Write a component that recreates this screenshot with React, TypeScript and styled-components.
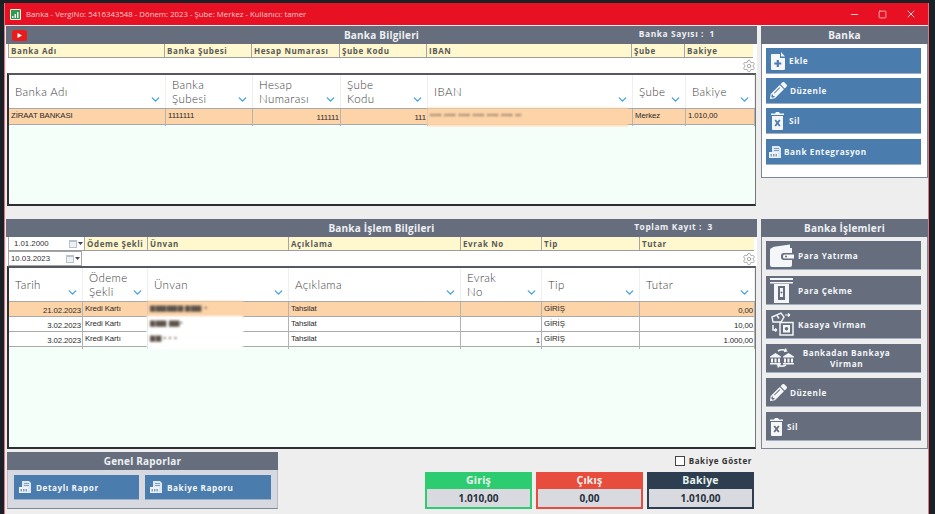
import React from 'react';
import styled, { createGlobalStyle } from 'styled-components';
import { ChevronDown, Minus, Settings, Square, X } from 'lucide-react';
import { FaPencilAlt } from 'react-icons/fa';

const GlobalStyle = createGlobalStyle`
  * { box-sizing: border-box; }
  html, body { margin: 0; height: 100%; overflow: hidden; background: #1b1f26; }
  body { font-family: "Open Sans", "Liberation Sans", sans-serif; }
`;

const Screen = styled.div`
  width: 935px;
  height: 514px;
  padding: 3px 6px 0 4px;
`;

const Window = styled.div`
  height: 511px;
  background: #eeeeee;
  border-left: 1px solid #e8707c;
  border-right: 1px solid #e8707c;
  display: flex;
  flex-direction: column;
`;

const TitleBar = styled.div`
  height: 22px;
  background: #e81123;
  color: #f6c9cd;
  display: flex;
  align-items: center;
  padding-left: 5px;
  font-size: 7.8px;
  gap: 5px;
  flex: none;
`;

const TitleText = styled.span`
  flex: 1;
`;

const WinButtons = styled.div`
  display: flex;
  align-items: center;
  gap: 18px;
  padding-right: 11px;
  color: #f8d5d8;
`;

const Main = styled.div`
  flex: 1;
  display: grid;
  grid-template-columns: 751px 167px;
  gap: 4px;
  padding: 1px 0 0 1px;
`;

const Column = styled.div`
  display: flex;
  flex-direction: column;
`;

const Panel = styled.section<{ $height: number; $mb?: number }>`
  height: ${p => p.$height}px;
  margin-bottom: ${p => p.$mb ?? 0}px;
  display: flex;
  flex-direction: column;
  flex: none;
`;

const PanelHeader = styled.header`
  height: 18px;
  flex: none;
  background: #666e7e;
  color: #eef0f3;
  display: grid;
  grid-template-columns: 1fr auto 1fr;
  align-items: center;
  font-size: 10px;
  font-weight: 700;
  letter-spacing: 0.2px;
`;

const YouTubeMark = styled.svg`
  margin-left: 6px;
`;

const HeaderInfo = styled.span<{ $right: number }>`
  grid-column: 3;
  justify-self: end;
  padding: 0 ${p => p.$right}px 3px 0;
  font-size: 8.4px;
  letter-spacing: 0.6px;
`;

const FilterGrid = styled.div<{ $cols: string }>`
  display: grid;
  grid-template-columns: ${p => p.$cols};
  height: 14px;
  flex: none;
  padding-left: 2px;
  background: #ffffff;
`;

const FilterCell = styled.div`
  background: #fff8cf;
  border-left: 1px solid #a5a5a5;
  border-bottom: 1px solid #9c9c9c;
  color: #5a5a58;
  font-size: 8px;
  font-weight: 700;
  letter-spacing: 0.6px;
  line-height: 13px;
  padding-left: 2px;
  white-space: nowrap;
  overflow: hidden;
`;

const BlankRow = styled.div`
  height: 15px;
  flex: none;
  background: #ffffff;
  display: flex;
  justify-content: flex-end;
  align-items: center;
  padding-right: 1px;
  color: #a2a2a2;
`;

const TableBox = styled.div`
  flex: 1;
  margin: 0 1px;
  border: 2px solid #2f2f33;
  border-right: 1px solid #777;
  border-top-color: #55585e;
  background: #f5fffa;
`;

const TableRow = styled.div<{ $cols: string; $height: number; $bg?: string }>`
  display: grid;
  grid-template-columns: ${p => p.$cols};
  height: ${p => p.$height}px;
  background: ${p => p.$bg ?? '#ffffff'};
  border-bottom: 1px solid #a9a9a9;
`;

const HeadCell = styled.div`
  display: flex;
  align-items: center;
  justify-content: space-between;
  padding: 0 3px 0 6px;
  border-right: 1px solid #efefef;
  color: #3e3e3e;
  font-family: Lato, "Open Sans", sans-serif;
  font-size: 11.5px;
  line-height: 14px;
  letter-spacing: 0.4px;
  font-weight: 300;
  white-space: pre-line;

  svg {
    align-self: flex-end;
    flex: none;
    margin-bottom: 2px;
    color: #3f9fe3;
  }
`;

const Cell = styled.div<{ $right?: boolean }>`
  border-right: 1px solid #b3b3b3;
  color: #2a2a2a;
  font-family: "Liberation Sans", sans-serif;
  font-size: 7.8px;
  letter-spacing: -0.1px;
  line-height: 14px;
  padding: ${p => (p.$right ? '2px 1px 0 0' : '0 0 0 2px')};
  text-align: ${p => (p.$right ? 'right' : 'left')};
  white-space: nowrap;
  overflow: hidden;
`;

const MaskCell = styled(Cell)`
  overflow: visible;
  position: relative;
  z-index: 1;
`;

const Redacted = styled.span<{ $bg: string; $over: number }>`
  display: block;
  height: 18px;
  margin: -1px ${p => p.$over}px 0 -3px;
  padding-left: 3px;
  background: ${p => p.$bg};
  color: #5d534b;
  font-size: 7px;
  letter-spacing: 0.5px;
  filter: blur(1.1px);
`;

const DateRows = styled.div`
  border-left: 1px solid #a5a5a5;
  border-bottom: 1px solid #9c9c9c;
  background: #fff;
  color: #333;
  font-family: "Liberation Sans", sans-serif;
  font-size: 7.8px;
  line-height: 13px;
  padding-left: 5px;
  display: flex;
  justify-content: space-between;
  padding-right: 1px;
`;

const DateOnlyRow = styled.div`
  height: 15px;
  flex: none;
  background: #fff;
  display: flex;
  justify-content: space-between;
  align-items: center;
  padding-right: 1px;
  color: #a2a2a2;
`;

const DateBox = styled(DateRows)`
  width: 74px;
  margin-left: 2px;
  height: 15px;
  padding-left: 2px;
  border: 1px solid #a5a5a5;
  line-height: 13px;
`;

const DropMark = styled.span`
  display: inline-flex;
  align-items: center;
  gap: 1px;
`;

const SideBody = styled.div<{ $bg: string }>`
  flex: 1;
  background: ${p => p.$bg};
  border: 1px solid #7f8694;
  border-top: none;
  padding: 4px 6px 0 4px;
  display: flex;
  flex-direction: column;
`;

const ActionButton = styled.div<{ $bg: string; $h: number; $mb: number; $icon: number }>`
  height: ${p => p.$h}px;
  margin-bottom: ${p => p.$mb}px;
  background: ${p => p.$bg};
  color: #f4f6f8;
  font-size: 8.2px;
  font-weight: 700;
  letter-spacing: 0.55px;
  display: grid;
  grid-template-columns: ${p => p.$icon}px 1fr;
  align-items: center;
  flex: none;
  border-bottom: 1px solid #9fb0c5;
`;

const IconSlot = styled.span`
  display: flex;
  justify-content: center;
  align-items: center;
  color: #f4f6f8;
`;

const Centered = styled.span`
  text-align: center;
  line-height: 11px;
  padding-right: 26px;
  white-space: nowrap;
`;

const PanelTitleOnly = styled(PanelHeader)`
  display: flex;
  justify-content: center;
`;

const BottomRow = styled.div`
  margin-top: 3px;
  display: flex;
  justify-content: space-between;
  align-items: flex-start;
  padding-right: 2px;
`;

const ReportPanel = styled.div`
  width: 271px;
  margin-left: 1px;
  height: 57px;
  background: #d6dae0;
  border: 1px solid #b6bac4;
  border-bottom-color: #7f8694;
`;

const ReportHeader = styled(PanelTitleOnly)`
  margin: -1px -1px 0;
`;

const ReportButtons = styled.div`
  display: grid;
  grid-template-columns: 125px 126px;
  gap: 6px;
  padding: 5px 0 0 6px;
`;

const TotalsArea = styled.div`
  width: 330px;
  display: flex;
  flex-direction: column;
  align-items: stretch;
`;

const CheckLine = styled.label`
  height: 17px;
  display: flex;
  justify-content: flex-end;
  align-items: center;
  gap: 4px;
  color: #333;
  font-size: 8px;
  font-weight: 700;
  letter-spacing: 0.6px;
  padding-right: 3px;
`;

const CheckBox = styled.span`
  width: 10px;
  height: 10px;
  background: #fff;
  border: 1px solid #444;
`;

const TotalsGrid = styled.div`
  margin-top: 3px;
  display: grid;
  grid-template-columns: repeat(3, 107px);
  gap: 4px;
`;

const TotalCard = styled.div<{ $bg: string }>`
  height: 37px;
  background: ${p => p.$bg};
  padding: 0 2px 2px;
  display: flex;
  flex-direction: column;
  color: #e8f2ee;
  font-size: 10.5px;
  font-weight: 700;
  letter-spacing: 0.2px;
  text-align: center;
  line-height: 17px;
`;

const TotalValue = styled.div`
  flex: 1;
  background: #d8dadf;
  color: #27303c;
  font-size: 10px;
  letter-spacing: 0;
  line-height: 18px;
`;

const Blue = '#4a7dae';
const Slate = '#666e7e';

const FileAddIcon = () => (
  <svg width="14" height="19" viewBox="0 0 14 19">
    <path d="M1 3h8v4h5v11a1 1 0 0 1-1 1H1a1 1 0 0 1-1-1V4a1 1 0 0 1 1-1z" fill="#f4f6f8" />
    <path d="M10 1l4 4.500h-4z" fill="#f4f6f8" />
    <path d="M5.700 9h2.200v2.400h2.400v2.200H7.900V16H5.700v-2.400H3.300v-2.200h2.400z" fill={Blue} />
  </svg>
);

const TrashIcon = ({ cross }: { cross: string }) => (
  <svg width="13" height="19" viewBox="0 0 13 19">
    <path d="M0 2.500h4l1-1.500h3l1 1.500h4v1.500H0z" fill="#f4f6f8" />
    <path d="M1 5h11v13a1 1 0 0 1-1 1H2a1 1 0 0 1-1-1z" fill="#f4f6f8" />
    <path d="M4.200 9l4.600 6m0-6l-4.600 6" stroke={cross} strokeWidth="1.800" />
  </svg>
);

const ReportIcon = () => (
  <svg width="12" height="12" viewBox="0 0 12 12">
    <path d="M3 0h7l2 2v10H3z" fill="#dfe8f2" />
    <path d="M0 6h9v6H0z" fill="#eef3f8" />
    <path d="M1.500 8h1.500v2.500H1.500zM4 8h1.500v2.500H4zM6.500 8h1.500v2.500H6.500z" fill="#7e9fc2" />
    <path d="M5 2h5v1H5zM5 4h5v1H5z" fill="#7e9fc2" />
  </svg>
);

const WalletIcon = () => (
  <svg width="24" height="23" viewBox="0 0 24 23">
    <path d="M2 5C2 3.500 3 3 4 2.800L20 .5v3.500H6z" fill="#f4f6f8" />
    <path d="M0 6a2 2 0 0 1 2-2h20v5h-8a3 3 0 0 0-3 3v1a3 3 0 0 0 3 3h8v5a2 2 0 0 1-2 2H2a2 2 0 0 1-2-2z" fill="#f4f6f8" />
    <path d="M14.500 10.500H24v4h-9.500a1.500 1.500 0 0 1-1.500-1.500v-1a1.500 1.500 0 0 1 1.500-1.500z" fill="#f4f6f8" />
    <circle cx="16" cy="12.500" r="1" fill={Slate} />
  </svg>
);

const AtmIcon = () => (
  <svg width="24" height="25" viewBox="0 0 24 25">
    <path d="M0 0h23v2H0zM0 4h23v1.500H0z" fill="#f4f6f8" />
    <path d="M4 6h15v19H4z" fill="#f4f6f8" />
    <path d="M8 8h7v14H8z" fill={Slate} />
    <path d="M10 10h3v9h-3z" fill="#f4f6f8" />
    <circle cx="11.500" cy="14.500" r="1" fill={Slate} />
  </svg>
);

const SafeIcon = () => (
  <svg width="24" height="24" viewBox="0 0 24 24">
    <path d="M2 5l9-4 3 4-3 5H3z" fill="none" stroke="#f4f6f8" strokeWidth="1.400" />
    <path d="M7 3.500l2 3" stroke="#f4f6f8" strokeWidth="1.400" />
    <path d="M15 3h5M20 3l-2-1.500M20 3l-2 1.500" stroke="#f4f6f8" strokeWidth="1.200" fill="none" />
    <path d="M3 13v5h4M7 18l-2-1.500M7 18l-2 1.500" stroke="#f4f6f8" strokeWidth="1.500" fill="none" />
    <path d="M10 10.500h13V23H10z" fill="none" stroke="#f4f6f8" strokeWidth="1.500" />
    <path d="M13 13h7v7.500h-7z" fill="#f4f6f8" />
    <circle cx="16.500" cy="16.700" r="1.800" fill={Slate} />
  </svg>
);

const BankSwapIcon = () => (
  <svg width="24" height="24" viewBox="0 0 24 24">
    <path d="M8 5a8 8 0 0 1 8 0l-2 .5M16 5l-.5-2.500M16 19a8 8 0 0 1-8 0l2-.5M8 19l.500 2.500" stroke="#f4f6f8" strokeWidth="1.500" fill="none" />
    <g fill="#f4f6f8">
      <path d="M0 10.500L5.500 7l5.500 3.500v1H0zM1 12.500h2v4H1zM4.500 12.500h2v4h-2zM8 12.500h2v4H8zM0 17h11v1.500H0z" />
      <path d="M13 10.500L18.500 7l5.500 3.500v1H13zM14 12.500h2v4h-2zM17.500 12.500h2v4h-2zM21 12.500h2v4h-2zM13 17h11v1.500H13z" />
    </g>
  </svg>
);

const CalendarMark = () => (
  <DropMark>
    <svg width="8" height="8" viewBox="0 0 8 8">
      <rect width="8" height="8" fill="#b9c2cc" />
      <rect x="1" y="2" width="6" height="5" fill="#eef1f4" />
    </svg>
    <svg width="5" height="3" viewBox="0 0 5 3"><path d="M0 0h5L2.500 3z" fill="#445" /></svg>
  </DropMark>
);

const bankCols = '157px 87px 88px 87px 205px 53px 69px';
const bankFilterCols = '156px 87px 88px 87px 205px 53px 69px';
const opCols = '74px 65px 141px 172px 81px 98px 115px';
const opFilterCols = '76px 63px 141px 172px 81px 98px 115px';

const Head = ({ label }: { label: string }) => (
  <HeadCell>
    <span>{label}</span>
    <ChevronDown size={13} strokeWidth={2.4} />
  </HeadCell>
);

export default function App() {
  return (
    <Screen>
      <GlobalStyle />
      <Window>
        <TitleBar>
          <svg width="11" height="11" viewBox="0 0 11 11">
            <rect width="11" height="11" rx="1" fill="#dff3e2" />
            <rect x="1" y="1" width="9" height="9" fill="#2f9a4e" />
            <path d="M2 9V7h1.500v2zM4.500 9V5H6v4zM7 9V3h1.500v6z" fill="#e7f7ea" />
          </svg>
          <TitleText>Banka - VergiNo: 5416343548 - Dönem: 2023 - Şube: Merkez - Kullanıcı: tamer</TitleText>
          <WinButtons>
            <Minus size={11} />
            <Square size={9} />
            <X size={12} />
          </WinButtons>
        </TitleBar>
        <Main>
          <Column>
            <Panel $height={180} $mb={13}>
              <PanelHeader>
                <YouTubeMark width="15" height="11" viewBox="0 0 15 11">
                  <rect width="15" height="11" rx="2.500" fill="#e81c1c" />
                  <path d="M5.500 3l4.500 2.500L5.500 8z" fill="#fff" />
                </YouTubeMark>
                <span>Banka Bilgileri</span>
                <HeaderInfo $right={42}>Banka Sayısı :&nbsp;&nbsp;1</HeaderInfo>
              </PanelHeader>
              <FilterGrid $cols={bankFilterCols}>
                {['Banka Adı', 'Banka Şubesi', 'Hesap Numarası', 'Şube Kodu', 'IBAN', 'Şube', 'Bakiye'].map(c => (
                  <FilterCell key={c}>{c}</FilterCell>
                ))}
              </FilterGrid>
              <BlankRow>
                <Settings size={14} strokeWidth={1.6} />
              </BlankRow>
              <TableBox>
                <TableRow $cols={bankCols} $height={34}>
                  {['Banka Adı', 'Banka\nŞubesi', 'Hesap\nNumarası', 'Şube\nKodu', 'IBAN', 'Şube', 'Bakiye'].map(c => (
                    <Head key={c} label={c} />
                  ))}
                </TableRow>
                <TableRow $cols={bankCols} $height={16} $bg="#fdd3a8">
                  <Cell>ZİRAAT BANKASI</Cell>
                  <Cell>1111111</Cell>
                  <Cell $right>111111</Cell>
                  <Cell $right>111</Cell>
                  <MaskCell>
                    <Redacted $bg="#fdd3a8" $over={4}>•••• •••• •••• •••• •••• •••• ••</Redacted>
                  </MaskCell>
                  <Cell>Merkez</Cell>
                  <Cell>1.010,00</Cell>
                </TableRow>
              </TableBox>
            </Panel>

            <Panel $height={230}>
              <PanelHeader>
                <span />
                <span>Banka İşlem Bilgileri</span>
                <HeaderInfo $right={44}>Toplam Kayıt :&nbsp;&nbsp;3</HeaderInfo>
              </PanelHeader>
              <FilterGrid $cols={opFilterCols}>
                <DateRows>
                  1.01.2000
                  <CalendarMark />
                </DateRows>
                {['Ödeme Şekli', 'Ünvan', 'Açıklama', 'Evrak No', 'Tip', 'Tutar'].map(c => (
                  <FilterCell key={c}>{c}</FilterCell>
                ))}
              </FilterGrid>
              <DateOnlyRow>
                <DateBox>
                  10.03.2023
                  <CalendarMark />
                </DateBox>
                <Settings size={14} strokeWidth={1.6} />
              </DateOnlyRow>
              <TableBox>
                <TableRow $cols={opCols} $height={34}>
                  {['Tarih', 'Ödeme\nŞekli', 'Ünvan', 'Açıklama', 'Evrak\nNo', 'Tip', 'Tutar'].map(c => (
                    <Head key={c} label={c} />
                  ))}
                </TableRow>
                {[
                  { date: '21.02.2023', mask: '▆▆▆▆▆▆ ▆▆▆ ▪', no: '', total: '0,00', bg: '#fdd3a8' },
                  { date: '3.02.2023', mask: '▆▆▆ ▆▆▪', no: '', total: '10,00', bg: '#ffffff' },
                  { date: '3.02.2023', mask: '▆▆   • • •', no: '1', total: '1.000,00', bg: '#ffffff' },
                ].map(r => (
                  <TableRow key={r.total} $cols={opCols} $height={15} $bg={r.bg}>
                    <Cell $right>{r.date}</Cell>
                    <Cell>Kredi Kartı</Cell>
                    <MaskCell>
                      <Redacted $bg={r.bg} $over={45}>{r.mask}</Redacted>
                    </MaskCell>
                    <Cell>Tahsilat</Cell>
                    <Cell $right>{r.no}</Cell>
                    <Cell>GİRİŞ</Cell>
                    <Cell $right>{r.total}</Cell>
                  </TableRow>
                ))}
              </TableBox>
            </Panel>

            <BottomRow>
              <ReportPanel>
                <ReportHeader>Genel Raporlar</ReportHeader>
                <ReportButtons>
                  <ActionButton $bg={Blue} $h={25} $mb={0} $icon={22}>
                    <IconSlot><ReportIcon /></IconSlot>
                    <span>Detaylı Rapor</span>
                  </ActionButton>
                  <ActionButton $bg={Blue} $h={25} $mb={0} $icon={22}>
                    <IconSlot><ReportIcon /></IconSlot>
                    <span>Bakiye Raporu</span>
                  </ActionButton>
                </ReportButtons>
              </ReportPanel>
              <TotalsArea>
                <CheckLine>
                  <CheckBox />
                  Bakiye Göster
                </CheckLine>
                <TotalsGrid>
                  <TotalCard $bg="#2ecc71">
                    Giriş
                    <TotalValue>1.010,00</TotalValue>
                  </TotalCard>
                  <TotalCard $bg="#e74c3c">
                    Çıkış
                    <TotalValue>0,00</TotalValue>
                  </TotalCard>
                  <TotalCard $bg="#2c3e50">
                    Bakiye
                    <TotalValue>1.010,00</TotalValue>
                  </TotalCard>
                </TotalsGrid>
              </TotalsArea>
            </BottomRow>
          </Column>

          <Column>
            <Panel $height={152} $mb={41}>
              <PanelTitleOnly>Banka</PanelTitleOnly>
              <SideBody $bg="#ffffff">
                <ActionButton $bg={Blue} $h={26} $mb={4} $icon={23}>
                  <IconSlot><FileAddIcon /></IconSlot>
                  <span>Ekle</span>
                </ActionButton>
                <ActionButton $bg={Blue} $h={26} $mb={4} $icon={24}>
                  <IconSlot><FaPencilAlt size={17} /></IconSlot>
                  <span>Düzenle</span>
                </ActionButton>
                <ActionButton $bg={Blue} $h={26} $mb={5} $icon={23}>
                  <IconSlot><TrashIcon cross={Blue} /></IconSlot>
                  <span>Sil</span>
                </ActionButton>
                <ActionButton $bg={Blue} $h={26} $mb={0} $icon={18}>
                  <IconSlot><ReportIcon /></IconSlot>
                  <span>Bank Entegrasyon</span>
                </ActionButton>
              </SideBody>
            </Panel>

            <Panel $height={230}>
              <PanelTitleOnly>Banka İşlemleri</PanelTitleOnly>
              <SideBody $bg="#eeeeee">
                <ActionButton $bg={Slate} $h={29} $mb={6} $icon={32}>
                  <IconSlot><WalletIcon /></IconSlot>
                  <span>Para Yatırma</span>
                </ActionButton>
                <ActionButton $bg={Slate} $h={29} $mb={5} $icon={32}>
                  <IconSlot><AtmIcon /></IconSlot>
                  <span>Para Çekme</span>
                </ActionButton>
                <ActionButton $bg={Slate} $h={29} $mb={5} $icon={32}>
                  <IconSlot><SafeIcon /></IconSlot>
                  <span>Kasaya Virman</span>
                </ActionButton>
                <ActionButton $bg={Slate} $h={29} $mb={5} $icon={32}>
                  <IconSlot><BankSwapIcon /></IconSlot>
                  <Centered>Bankadan Bankaya<br />Virman</Centered>
                </ActionButton>
                <ActionButton $bg={Slate} $h={29} $mb={5} $icon={24}>
                  <IconSlot><FaPencilAlt size={17} /></IconSlot>
                  <span>Düzenle</span>
                </ActionButton>
                <ActionButton $bg={Slate} $h={29} $mb={0} $icon={21}>
                  <IconSlot><TrashIcon cross={Slate} /></IconSlot>
                  <span>Sil</span>
                </ActionButton>
              </SideBody>
            </Panel>
          </Column>
        </Main>
      </Window>
    </Screen>
  );
}
